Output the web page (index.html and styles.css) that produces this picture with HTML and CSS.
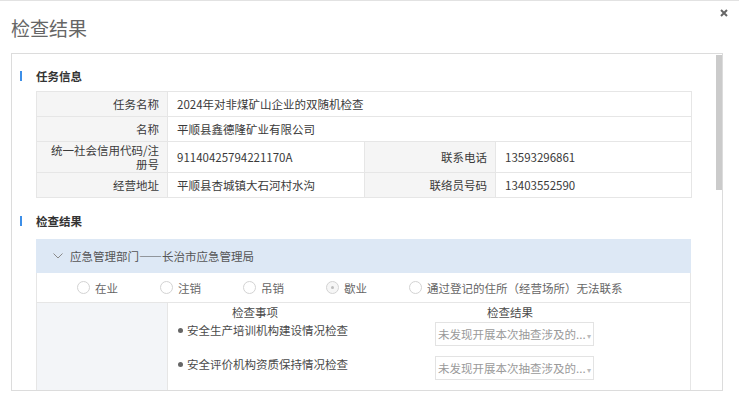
FILE: index.html
```html
<!DOCTYPE html>
<html lang="zh-CN">
<head>
  <meta charset="UTF-8">
  <title>检查结果</title>
  <link rel="stylesheet" href="styles.css">
</head>
<body>
<div class="page">

  <!-- 弹窗标题 -->
  <header class="dialog-head">
    <h1 class="dialog-title">检查结果</h1>
    <span class="close-btn">
      <svg width="8" height="8" viewBox="0 0 8 8"><path d="M1 1L7 7M7 1L1 7" stroke="#666" stroke-width="2"/></svg>
    </span>
  </header>

  <div class="dialog-body">
    <div class="body-inner">

      <div class="section-title"><i class="bar"></i>任务信息</div>
      <table class="info-table">
        <colgroup>
          <col style="width:131px"><col style="width:197px"><col style="width:131px"><col style="width:196px">
        </colgroup>
        <tr>
          <td class="label">任务名称</td>
          <td class="value" colspan="3">2024年对非煤矿山企业的双随机检查</td>
        </tr>
        <tr>
          <td class="label">名称</td>
          <td class="value" colspan="3">平顺县鑫德隆矿业有限公司</td>
        </tr>
        <tr class="tall">
          <td class="label">统一社会信用代码/注册号</td>
          <td class="value">91140425794221170A</td>
          <td class="label">联系电话</td>
          <td class="value">13593296861</td>
        </tr>
        <tr>
          <td class="label">经营地址</td>
          <td class="value">平顺县杏城镇大石河村水沟</td>
          <td class="label">联络员号码</td>
          <td class="value">13403552590</td>
        </tr>
      </table>

      <div class="section-title second"><i class="bar"></i>检查结果</div>

      <div class="dept">
        <div class="dept-head">
          <svg class="chevron" width="10" height="6" viewBox="0 0 10 6"><path d="M0.5 0.5L5 5L9.5 0.5" fill="none" stroke="#8a8a8a" stroke-width="1"/></svg>
          应急管理部门——长治市应急管理局
        </div>

        <div class="status-row">
          <label class="radio"><span class="circle"></span>在业</label>
          <label class="radio"><span class="circle"></span>注销</label>
          <label class="radio"><span class="circle"></span>吊销</label>
          <label class="radio"><span class="circle checked"></span>歇业</label>
          <label class="radio wide"><span class="circle"></span>通过登记的住所（经营场所）无法联系</label>
        </div>

        <div class="check-row">
          <div class="check-side"></div>
          <div class="check-main">
            <div class="check-head">
              <span class="col-item">检查事项</span>
              <span class="col-result">检查结果</span>
            </div>
            <div class="check-item">
              <span class="item-name"><i class="dot"></i>安全生产培训机构建设情况检查</span>
              <div class="select">未发现开展本次抽查涉及的...<i class="caret">▾</i></div>
            </div>
            <div class="check-item">
              <span class="item-name"><i class="dot"></i>安全评价机构资质保持情况检查</span>
              <div class="select">未发现开展本次抽查涉及的...<i class="caret">▾</i></div>
            </div>
            <div class="check-item">
              <span class="item-name center">检查</span>
              <div class="select"></div>
            </div>
          </div>
        </div>
      </div>

    </div>
    <!-- 滚动条 -->
    <div class="scrollbar"><div class="thumb"></div></div>
  </div>
</div>
</body>
</html>
```

FILE: styles.css
```css
/* 基础 */
body {
  margin: 0;
  font-family: "Noto Sans CJK SC", "Noto Sans", sans-serif;
  font-size: 11.5px;
  color: #3a3a3a;
  background: #fff;
}

.page {
  border-top: 1px solid #e2e2e2;
}

/* 标题栏 */
.dialog-head {
  display: flex;
  justify-content: space-between;
  align-items: flex-start;
  height: 52px;
  padding: 0 11px;
}
.dialog-title {
  margin: 0;
  padding-top: 14px;
  font-size: 19px;
  line-height: 26px;
  font-weight: normal;
  color: #666;
}
.close-btn {
  display: block;
  margin-top: 8px;
  line-height: 0;
}

/* 内容区 */
.dialog-body {
  display: flex;
  margin-left: 11px;
  width: 712px;
  height: 338px;
  box-sizing: border-box;
  border: 1px solid #dcdcdc;
  overflow: hidden;
}
.body-inner {
  flex: 1;
  padding: 14px 0 0 8px;
  overflow: hidden;
}
.scrollbar {
  width: 6px;
  padding-top: 1px;
}
.scrollbar .thumb {
  height: 135px;
  background: #cbcbcb;
}

/* 小标题 */
.section-title {
  display: flex;
  align-items: center;
  height: 16px;
  font-weight: bold;
  color: #333;
}
.section-title .bar {
  width: 2px;
  height: 10px;
  background: #3d8fe8;
  margin-right: 14px;
}
.section-title.second {
  margin-top: 15px;
}

/* 信息表 */
.info-table {
  margin: 7px 0 0 16px;
  width: 655px;
  table-layout: fixed;
  border-collapse: collapse;
}
.info-table td {
  border: 1px solid #e6e6e6;
  height: 24px;
  padding: 0;
  line-height: 14px;
}
.info-table tr.tall td {
  height: 30px;
}
.info-table .label {
  background: #f5f5f5;
  text-align: right;
  padding-right: 8px;
  padding-left: 8px;
}
.info-table .value {
  padding-left: 9px;
}

/* 部门折叠面板 */
.dept {
  margin: 10px 0 0 16px;
  width: 655px;
}
.dept-head {
  display: flex;
  align-items: center;
  height: 34px;
  padding-left: 17px;
  background: #dde8f5;
  color: #555;
}
.chevron {
  margin-right: 7px;
}

.status-row {
  display: flex;
  align-items: center;
  height: 29px;
  padding-left: 40px;
  border: 1px solid #e6e6e6;
  border-top: none;
  color: #666;
}
.radio {
  display: inline-flex;
  align-items: center;
  width: 83px;
}
.radio.wide {
  width: auto;
}
.circle {
  width: 11px;
  height: 11px;
  border: 1px solid #d3d3d3;
  border-radius: 50%;
  margin-right: 5px;
  display: flex;
  align-items: center;
  justify-content: center;
}
.circle.checked {
  background: #f6f6f6;
}
.circle.checked::after {
  content: "";
  width: 3px;
  height: 3px;
  border-radius: 50%;
  background: #bdbdbd;
}

/* 检查事项 */
.check-row {
  display: flex;
  border: 1px solid #e6e6e6;
  border-top: none;
}
.check-side {
  width: 130px;
  background: #f3f5f8;
  border-right: 1px solid #e6e6e6;
}
.check-main {
  flex: 1;
  color: #4a4a4a;
}
.check-head {
  display: flex;
  height: 18px;
  line-height: 18px;
  margin-bottom: 1px;
}
.check-head span {
  text-align: center;
}
.col-item {
  width: 174px;
}
.col-result {
  width: 336px;
}
.check-item {
  display: flex;
  align-items: flex-start;
  margin-bottom: 10px;
}
.item-name {
  display: flex;
  align-items: center;
  width: 257px;
  padding-left: 10px;
  line-height: 16px;
}
.item-name.center {
  justify-content: center;
  padding: 3px 0 0 0;
  width: 174px;
  margin-right: 93px;
}
.dot {
  width: 5px;
  height: 5px;
  border-radius: 50%;
  background: #666;
  margin-right: 4px;
}
.select {
  width: 159px;
  height: 24px;
  box-sizing: border-box;
  border: 1px solid #e3e3e3;
  padding-left: 2px;
  line-height: 22px;
  color: #9a9a9a;
  white-space: nowrap;
  overflow: hidden;
}
.caret {
  font-style: normal;
  font-size: 8px;
  color: #bbb;
  margin-left: 1px;
}
```
